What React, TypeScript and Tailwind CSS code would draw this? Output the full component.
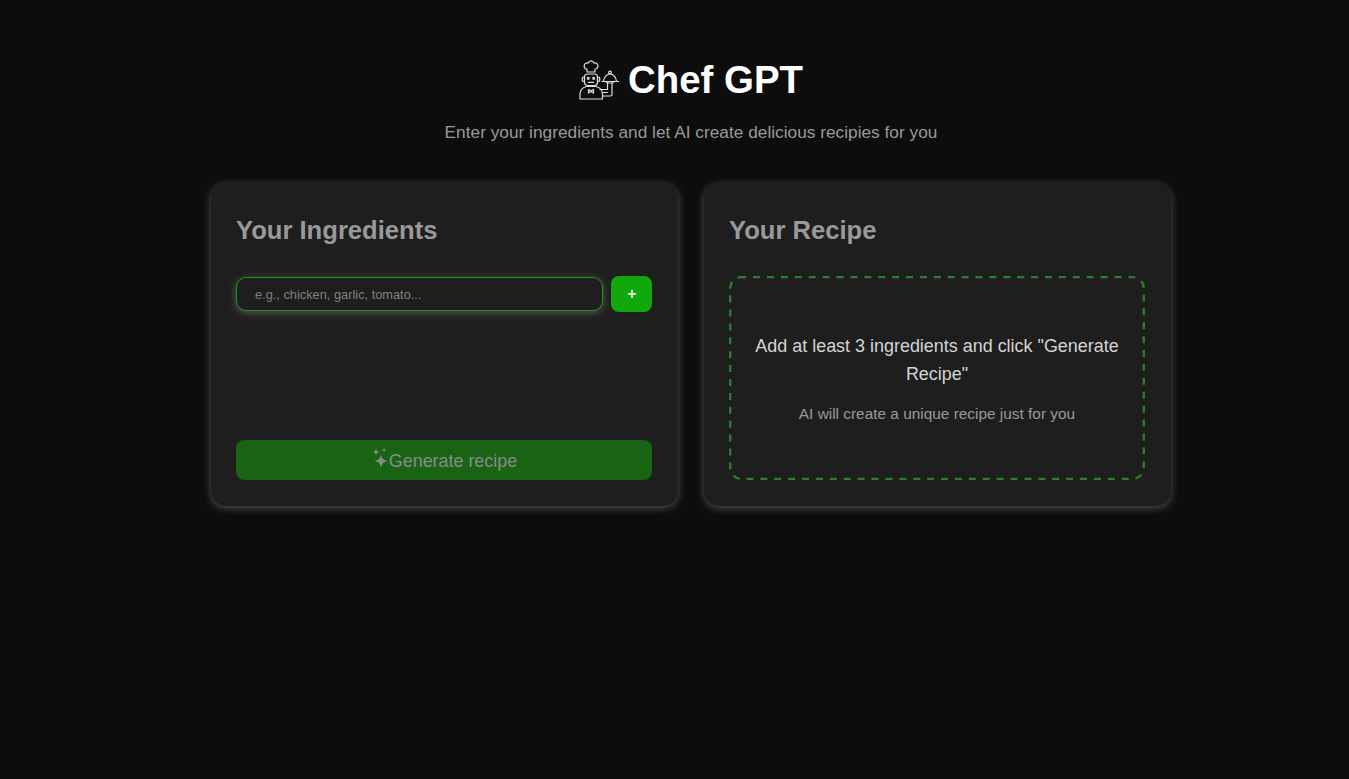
import { Plus } from "lucide-react";

function ChefIcon() {
  return (
    <svg width="40" height="40" viewBox="0 0 40 40" fill="none" stroke="#dedede" strokeWidth="1.2" strokeLinejoin="round" strokeLinecap="round">
      {/* hat */}
      <path d="M8 12V9.300C5.800 8.600 4.800 6.900 5.300 5.100 5.800 3.500 7.500 2.700 9 3.100 9.800 1.600 10.800 .9 12 .9s2.400.7 3.100 2.200c1.600-.4 3.200.4 3.700 2 .5 1.800-.6 3.500-2.800 4.200V12z" />
      {/* head */}
      <rect x="5.500" y="14" width="13" height="11.500" rx="3" />
      <rect x="3.300" y="17" width="2.200" height="4.500" rx="1" />
      <rect x="18.500" y="17" width="2.200" height="4.500" rx="1" />
      <circle cx="9.300" cy="18.300" r="1" />
      <circle cx="14.700" cy="18.300" r="1" />
      <path d="M9.500 22.300h5" />
      {/* body */}
      <path d="M1 39V34c0-4 3-6.500 6.500-7.500h9.500c3.500 1 6.500 3.500 6.500 7.500v5z" />
      <path d="M9.500 29.500l2.500 1.500 2.500-1.500v3.500l-2.500-1.500-2.500 1.500z" />
      {/* arm */}
      <path d="M21 29.500h7.500V23" />
      <path d="M33 23v11.500c0 1-.6 1.500-1.500 1.500H24" />
      <path d="M24 32.500h4.500" />
      {/* tray */}
      <path d="M23 21.500h16.500" />
      <path d="M24.500 21.500c.3-4.500 3.300-7.500 6.500-7.500s6.200 3 6.500 7.500" />
      <circle cx="31" cy="12.500" r="1.400" />
      <path d="M27 21.500l1.500 1.500h5l1.500-1.500" />
    </svg>
  );
}

function Sparkle() {
  return (
    <svg width="18" height="22" viewBox="0 0 18 22" fill="#8a8a8a" className="-mt-[6px]">
      <path d="M10 7c.7 4.300 2 6 6.500 7-4.500 1-5.800 2.700-6.500 7-.7-4.300-2-6-6.500-7 4.500-1 5.800-2.700 6.500-7z" />
      <path d="M5 1.500c.4 2.400 1.200 3.100 3.500 3.500-2.300.4-3.100 1.100-3.500 3.500-.4-2.400-1.200-3.100-3.500-3.500 2.300-.4 3.100-1.100 3.500-3.500z" />
      <path d="M13 .8c.3 1.500.7 1.900 2.200 2.200-1.500.3-1.900.7-2.200 2.200-.3-1.500-.7-1.900-2.200-2.200 1.500-.3 1.900-.7 2.200-2.200z" />
    </svg>
  );
}

function Card({ title, children }: { title: string; children: React.ReactNode }) {
  return (
    <section className="flex h-[323px] w-[467px] flex-col rounded-[15px] bg-[#1e1e1e] pt-[25px] pr-[26px] pl-[25px] shadow-[0_2px_8px_rgba(255,255,255,0.28)]">
      <h2 className="mb-[24px] text-[25.6px] leading-[44px] font-bold text-[#999999]">{title}</h2>
      {children}
    </section>
  );
}

export default function App() {
  return (
    <div className="flex min-h-[779px] flex-col items-center bg-[#0d0d0d] pl-[33px] font-['Liberation_Sans',Arial,sans-serif]">
      <header className="mt-[58px] flex h-[44px] items-center gap-[9px]">
        <ChefIcon />
        <h1 className="text-[38.4px] leading-[44px] font-bold text-white">Chef GPT</h1>
      </header>
      <p className="mt-[17px] text-[17.3px] leading-[26px] text-[#999999]">
        Enter your ingredients and let AI create delicious recipies for you
      </p>
      <main className="mt-[38px] flex gap-[26px]">
        <Card title="Your Ingredients">
          <div className="flex items-center gap-[8px]">
            <input
              placeholder="e.g., chicken, garlic, tomato..."
              className="h-[34px] w-[367px] rounded-[10px] border border-[#12a010] bg-[#1e1e1e] px-[18px] text-[12.8px] text-[#808080] shadow-[0_2px_8px_rgba(255,255,255,0.25)] outline-none placeholder:text-[#808080]"
            />
            <button className="flex h-[36px] w-[41px] items-center justify-center rounded-[8px] bg-[#10a80b] text-white">
              <Plus size={12} strokeWidth={3} />
            </button>
          </div>
          <button className="mt-[128px] flex h-[40px] w-full items-center justify-center rounded-[8px] bg-[#186414] pt-[2px] text-[17.9px] text-[#8a8a8a]">
            <Sparkle />
            Generate recipe
          </button>
        </Card>
        <Card title="Your Recipe">
          <div className="relative flex h-[204px] flex-col items-center justify-center px-[20px] pt-[2px] text-center">
            {/* dashed frame: the browser's own dashed border has a shorter period */}
            <svg className="absolute inset-0" width="416" height="204" fill="none" stroke="#2e7d32" strokeWidth="2.300">
              <rect x="1.200" y="1.200" width="413.600" height="201.600" rx="11" strokeDasharray="7 6.900" strokeDashoffset="2" />
            </svg>
            <p className="text-[17.95px] leading-[28px] text-[#d4d4d4]">
              Add at least 3 ingredients and click "Generate Recipe"
            </p>
            <p className="mt-[14px] text-[15.4px] leading-[24px] text-[#999999]">
              AI will create a unique recipe just for you
            </p>
          </div>
        </Card>
      </main>
    </div>
  );
}
